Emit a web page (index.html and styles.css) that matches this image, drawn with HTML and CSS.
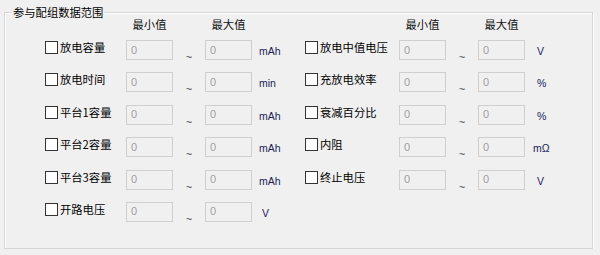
FILE: index.html
```html
<!DOCTYPE html>
<html lang="zh-CN">
<head>
    <meta charset="UTF-8">
    <title>参与配组数据范围</title>
    <link rel="stylesheet" href="styles.css">
</head>
<body>
    <fieldset class="group">
        <legend>参与配组数据范围</legend>
        <div class="grid">
            <!-- header -->
            <span></span>
            <span class="head">最小值</span>
            <span></span>
            <span class="head">最大值</span>
            <span></span>
            <span></span>
            <span class="head">最小值</span>
            <span></span>
            <span class="head">最大值</span>
            <span></span>

            <!-- row 1 -->
            <label class="check"><input type="checkbox">放电容量</label>
            <input class="val" type="text" value="0" disabled>
            <span class="tilde">~</span>
            <input class="val" type="text" value="0" disabled>
            <span class="unit">mAh</span>
            <label class="check"><input type="checkbox">放电中值电压</label>
            <input class="val" type="text" value="0" disabled>
            <span class="tilde">~</span>
            <input class="val" type="text" value="0" disabled>
            <span class="unit">V</span>

            <!-- row 2 -->
            <label class="check"><input type="checkbox">放电时间</label>
            <input class="val" type="text" value="0" disabled>
            <span class="tilde">~</span>
            <input class="val" type="text" value="0" disabled>
            <span class="unit">min</span>
            <label class="check"><input type="checkbox">充放电效率</label>
            <input class="val" type="text" value="0" disabled>
            <span class="tilde">~</span>
            <input class="val" type="text" value="0" disabled>
            <span class="unit">%</span>

            <!-- row 3 -->
            <label class="check"><input type="checkbox">平台1容量</label>
            <input class="val" type="text" value="0" disabled>
            <span class="tilde">~</span>
            <input class="val" type="text" value="0" disabled>
            <span class="unit">mAh</span>
            <label class="check"><input type="checkbox">衰减百分比</label>
            <input class="val" type="text" value="0" disabled>
            <span class="tilde">~</span>
            <input class="val" type="text" value="0" disabled>
            <span class="unit">%</span>

            <!-- row 4 -->
            <label class="check"><input type="checkbox">平台2容量</label>
            <input class="val" type="text" value="0" disabled>
            <span class="tilde">~</span>
            <input class="val" type="text" value="0" disabled>
            <span class="unit">mAh</span>
            <label class="check"><input type="checkbox">内阻</label>
            <input class="val" type="text" value="0" disabled>
            <span class="tilde">~</span>
            <input class="val" type="text" value="0" disabled>
            <span class="unit ohm">mΩ</span>

            <!-- row 5 -->
            <label class="check"><input type="checkbox">平台3容量</label>
            <input class="val" type="text" value="0" disabled>
            <span class="tilde">~</span>
            <input class="val" type="text" value="0" disabled>
            <span class="unit">mAh</span>
            <label class="check"><input type="checkbox">终止电压</label>
            <input class="val" type="text" value="0" disabled>
            <span class="tilde">~</span>
            <input class="val" type="text" value="0" disabled>
            <span class="unit">V</span>

            <!-- row 6 -->
            <label class="check"><input type="checkbox">开路电压</label>
            <input class="val" type="text" value="0" disabled>
            <span class="tilde">~</span>
            <input class="val" type="text" value="0" disabled>
            <span class="unit volt">V</span>
        </div>
    </fieldset>
</body>
</html>
```

FILE: styles.css
```css
html, body {
    margin: 0;
    padding: 0;
    background-color: #f0f0f0;
}
body {
    font-family: "Noto Sans CJK SC", sans-serif;
    font-size: 11.3px;
    color: #000;
}
.group {
    box-sizing: border-box;
    margin: 5px 0 0 4px;
    padding: 0;
    width: 589px;
    height: 244px;
    min-width: 0;
    border: 1px solid #d5d5d5;
    box-shadow: inset 1px 1px 0 #fff, 1px 1px 0 #fff;
}
.group legend {
    margin-left: 7px;
    padding: 0 1px;
    line-height: 14px;
    font-size: 11.3px;
}
.grid {
    display: grid;
    grid-template-columns: 81px 47px 32px 47px 53px 94px 47px 32px 47px 40px;
    grid-template-rows: 16px;
    grid-auto-rows: 32.4px;
    margin-top: -3px;
    padding-left: 40px;
}
.head {
    text-align: center;
    line-height: 16px;
    color: #111;
}
.check {
    display: flex;
    align-items: center;
    align-self: start;
    margin-top: 9px;
    height: 13px;
    line-height: 13px;
    white-space: nowrap;
}
.check input {
    appearance: none;
    -webkit-appearance: none;
    box-sizing: border-box;
    width: 13px;
    height: 13px;
    margin: 0 2px 0 0;
    border: 1px solid #333;
    background-color: #fff;
}
.val {
    box-sizing: border-box;
    align-self: start;
    margin: 8px 0 0 0;
    width: 47px;
    height: 20px;
    padding: 0 0 1px 4px;
    border: 1px solid #cfcfcf;
    background-color: #f0f0f0;
    color: #a0a0a0;
    font-family: "Liberation Sans", Arial, sans-serif;
    font-size: 11px;
}
.tilde {
    align-self: start;
    margin-top: 19px;
    line-height: 12px;
    text-align: center;
    font-family: "Liberation Sans", Arial, sans-serif;
    font-size: 11px;
    color: #444;
}
.unit {
    align-self: start;
    margin-top: 13px;
    padding-left: 7px;
    line-height: 12px;
    font-family: "Liberation Sans", Arial, sans-serif;
    font-size: 10.5px;
    color: #1c1c58;
}
.unit.ohm {
    margin-left: -4px;
}
.unit.volt {
    padding-left: 10px;
}
.grid > .unit:nth-child(10n) {
    padding-left: 12px;
}
```
